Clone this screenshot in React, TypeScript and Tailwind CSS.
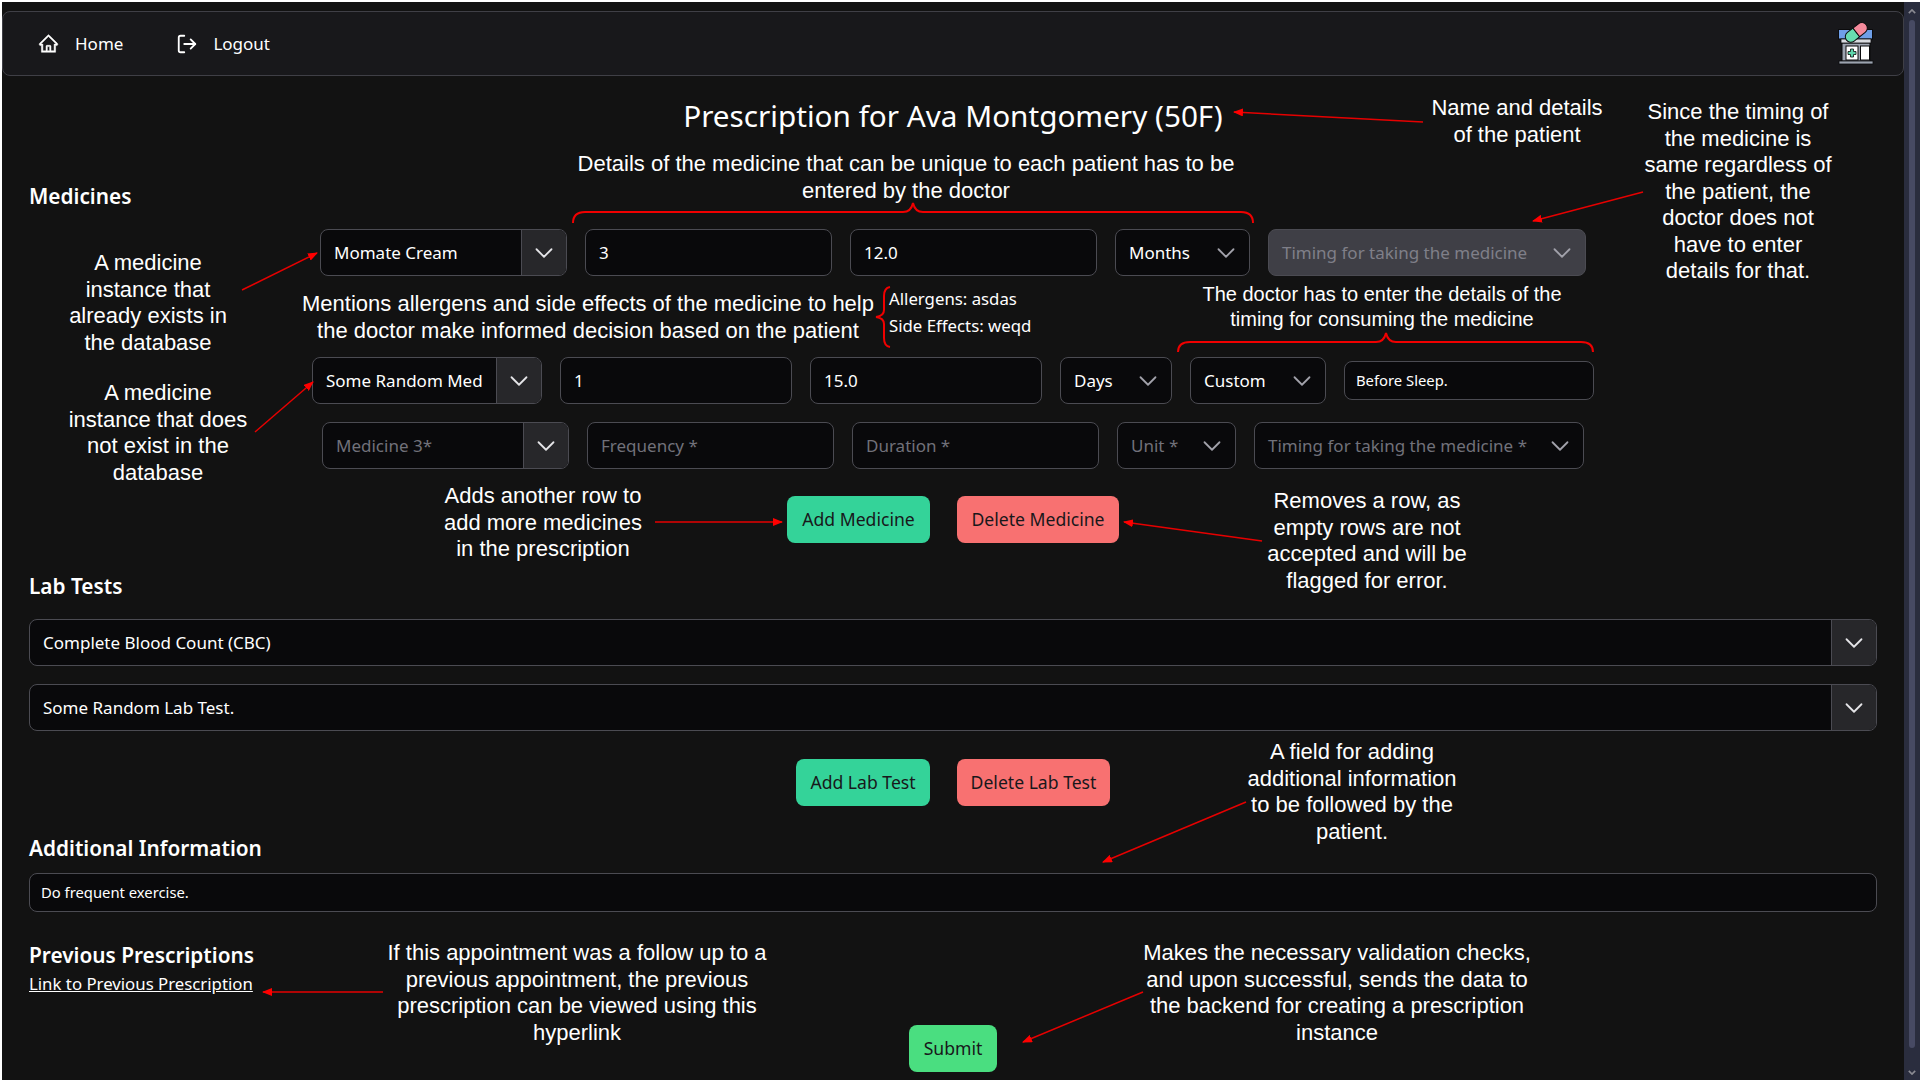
import { LogOut } from "lucide-react"
import { AiOutlineHome } from "react-icons/ai"

const uiFont = "font-['Noto_Sans',sans-serif]"
const noteFont = "font-['Liberation_Sans',Arial,sans-serif]"
const fieldBox = "flex shrink-0 items-center rounded-lg border border-[#4b4b52]"
const sectionTitle = "h-[28px] text-[20.8px] font-semibold leading-[28px]"

function Chevron({ className }: { className?: string }) {
  return (
    <svg viewBox="0 0 24 24" fill="none" stroke="currentColor" strokeWidth={1.8} className={className}>
      <path strokeLinecap="round" strokeLinejoin="round" d="m19.5 8.25-7.5 7.5-7.5-7.5" />
    </svg>
  )
}

function Combo({ text, width, muted }: { text: string; width: string; muted?: boolean }) {
  return (
    <div className={`${fieldBox} h-[47px] overflow-hidden bg-[#09090b] text-[17px] ${width}`}>
      <span className={`flex-1 truncate pl-[13px] ${muted ? "text-[#71717a]" : "text-white"}`}>{text}</span>
      <div className="flex h-full w-[45px] items-center justify-center border-l border-[#4b4b52] bg-[#27272a] text-[#e4e4e7]">
        <Chevron className="h-6 w-6" />
      </div>
    </div>
  )
}

function Field({ text, width, muted }: { text: string; width: string; muted?: boolean }) {
  return (
    <div className={`${fieldBox} h-[47px] bg-[#09090b] pl-[13px] text-[17px] ${width} ${muted ? "text-[#71717a]" : "text-white"}`}>{text}</div>
  )
}

function Dropdown({ text, width, muted, disabled }: { text: string; width: string; muted?: boolean; disabled?: boolean }) {
  return (
    <div
      className={`${fieldBox} h-[47px] justify-between pl-[13px] pr-[11px] text-[17px] ${width} ${
        disabled ? "bg-[#3f3f46] text-[#7f7f89]" : muted ? "bg-[#09090b] text-[#71717a]" : "bg-[#09090b] text-white"
      }`}
    >
      <span className="whitespace-nowrap">{text}</span>
      <Chevron className="h-6 w-6 shrink-0 text-[#a1a1aa]" />
    </div>
  )
}

function LabSelect({ text, className }: { text: string; className?: string }) {
  return (
    <div className={`${fieldBox} h-[47px] w-full overflow-hidden bg-[#09090b] text-[17px] ${className ?? ""}`}>
      <span className="flex-1 pl-[13px] text-white">{text}</span>
      <div className="flex h-full w-[45px] items-center justify-center border-l border-[#4b4b52] bg-[#27272a] text-[#e4e4e7]">
        <Chevron className="h-6 w-6" />
      </div>
    </div>
  )
}

function ActionButton({ text, className }: { text: string; className: string }) {
  return (
    <button className={`flex h-[47px] items-center justify-center rounded-lg text-[17.6px] text-[#18181b] ${className}`}>
      {text}
    </button>
  )
}

function PharmacyLogo() {
  return (
    <svg viewBox="0 0 60 55" className="h-[55px] w-[60px]">
      <rect x="16" y="27" width="28" height="18" fill="#9ca3af" stroke="#0b0b0d" strokeWidth="1" />
      <rect x="20" y="30" width="12" height="14" fill="#fff" stroke="#0b0b0d" strokeWidth="1" />
      <rect x="34.5" y="30" width="9" height="14" fill="#fff" stroke="#0b0b0d" strokeWidth="1" />
      <path d="M24.5 33h3v2.5H30v3h-2.500V41h-3v-2.500H22v-3h2.500z" fill="#5fd6ac" stroke="#0b0b0d" strokeWidth="0.8" />
      <rect x="12.500" y="13.500" width="34" height="9.500" fill="#6f9fe8" stroke="#0b0b0d" strokeWidth="1" />
      <rect x="15" y="23" width="30" height="4" fill="#d9dbe0" stroke="#0b0b0d" strokeWidth="0.8" />
      <g transform="rotate(-38 30 16)">
        <path d="M30 11h-7a5.500 5.500 0 0 0 0 11h7z" fill="#68dcb0" stroke="#0b0b0d" strokeWidth="1" />
        <path d="M30 11h7a5.500 5.500 0 0 1 0 11h-7z" fill="#f58a9b" stroke="#0b0b0d" strokeWidth="1" />
      </g>
      <rect x="13" y="45" width="34" height="3" fill="#9ca3af" stroke="#0b0b0d" strokeWidth="0.8" />
    </svg>
  )
}

function Scrollbar() {
  return (
    <aside className="flex w-[16px] shrink-0 flex-col items-center bg-[#2a2d3e] text-[#8a8a92]">
      <svg viewBox="0 0 10 6" className="mt-[7px] h-[5px] w-[8px]" fill="none" stroke="currentColor" strokeWidth="2">
        <path d="M1 5l4-4 4 4" />
      </svg>
      <div className="mt-[6px] h-[1028px] w-[6px] rounded-full bg-[#474a63]" />
      <svg viewBox="0 0 10 6" className="mt-[22px] h-[5px] w-[8px]" fill="none" stroke="currentColor" strokeWidth="2">
        <path d="M1 1l4 4 4-4" />
      </svg>
    </aside>
  )
}

function Annotations() {
  return (
    <>
      <svg className="pointer-events-none absolute inset-0 h-full w-full" viewBox="0 0 1923 1083" fill="none" stroke="#e60000" strokeWidth="1.5">
        <defs>
          <marker id="head" viewBox="0 0 10 8" refX="9" refY="4" markerWidth="10" markerHeight="8" markerUnits="userSpaceOnUse" orient="auto">
            <path d="M0 0L10 4L0 8z" fill="#ff0000" stroke="none" />
          </marker>
        </defs>
        <line x1="1423" y1="122" x2="1234" y2="112" markerEnd="url(#head)" />
        <line x1="1643" y1="192" x2="1533" y2="221" markerEnd="url(#head)" />
        <line x1="242" y1="290" x2="317" y2="253" markerEnd="url(#head)" />
        <line x1="255" y1="432" x2="313" y2="382" markerEnd="url(#head)" />
        <line x1="655" y1="522" x2="782" y2="522" markerEnd="url(#head)" />
        <line x1="1262" y1="541" x2="1124" y2="522" markerEnd="url(#head)" />
        <line x1="1246" y1="802" x2="1103" y2="862" markerEnd="url(#head)" />
        <line x1="383" y1="992" x2="263" y2="992" markerEnd="url(#head)" />
        <line x1="1143" y1="992" x2="1023" y2="1042" markerEnd="url(#head)" />
        <g stroke="#f00000" strokeWidth="2">
          <path d="M573 223Q573 212 585 212L903 212Q911 212 913 203Q915 212 923 212L1241 212Q1253 212 1253 223" />
          <path d="M1178 352Q1178 342 1190 342L1376 342Q1384 342 1386 333Q1388 342 1396 342L1581 342Q1593 342 1593 352" />
          <path d="M890 287Q884 288 884 296L884 310Q884 316 876 317Q884 318 884 324L884 338Q884 346 890 347" />
        </g>
      </svg>

      <div className={`absolute inset-0 text-center text-[22px] leading-[26.5px] whitespace-nowrap text-white ${noteFont}`}>
        <p className="absolute left-[1517px] top-[95px] -translate-x-1/2">Name and details<br />of the patient</p>
        <p className="absolute left-[1738px] top-[99px] -translate-x-1/2">
          Since the timing of<br />the medicine is<br />same regardless of<br />the patient, the<br />doctor does not<br />have to enter<br />details for that.
        </p>
        <p className="absolute left-[906px] top-[151px] -translate-x-1/2">
          Details of the medicine that can be unique to each patient has to be<br />entered by the doctor
        </p>
        <p className="absolute left-[148px] top-[250px] -translate-x-1/2">A medicine<br />instance that<br />already exists in<br />the database</p>
        <p className="absolute left-[588px] top-[291px] -translate-x-1/2">
          Mentions allergens and side effects of the medicine to help<br />the doctor make informed decision based on the patient
        </p>
        <p className="absolute left-[1382px] top-[282px] -translate-x-1/2 text-[20px] leading-[24.5px]">
          The doctor has to enter the details of the<br />timing for consuming the medicine
        </p>
        <p className="absolute left-[158px] top-[380px] -translate-x-1/2">A medicine<br />instance that does<br />not exist in the<br />database</p>
        <p className="absolute left-[543px] top-[483px] -translate-x-1/2">Adds another row to<br />add more medicines<br />in the prescription</p>
        <p className="absolute left-[1367px] top-[488px] -translate-x-1/2">Removes a row, as<br />empty rows are not<br />accepted and will be<br />flagged for error.</p>
        <p className="absolute left-[1352px] top-[739px] -translate-x-1/2">A field for adding<br />additional information<br />to be followed by the<br />patient.</p>
        <p className="absolute left-[577px] top-[940px] -translate-x-1/2">If this appointment was a follow up to a<br />previous appointment, the previous<br />prescription can be viewed using this<br />hyperlink</p>
        <p className="absolute left-[1337px] top-[940px] -translate-x-1/2">Makes the necessary validation checks,<br />and upon successful, sends the data to<br />the backend for creating a prescription<br />instance</p>
      </div>
    </>
  )
}

export default function App() {
  return (
    <div className={`relative flex h-[1083px] w-full overflow-hidden bg-white pb-[3px] pl-[2px] pr-[3px] pt-[2px] ${uiFont}`}>
      <main className="flex min-w-0 flex-1 flex-col bg-[#121212] pt-[9px] text-white">
        <nav className="flex h-[65px] shrink-0 items-center justify-between rounded-lg border border-[#3f3f46] bg-[#18181b] pl-[35px] pr-[17px]">
          <div className="flex items-center text-[17px]">
            <AiOutlineHome size={21} className="stroke-[24px]" />
            <span className="ml-[16px]">Home</span>
            <LogOut size={22} strokeWidth={2} className="ml-[53px]" />
            <span className="ml-[15px]">Logout</span>
          </div>
          <PharmacyLogo />
        </nav>

        <div className="flex flex-col px-[27px]">
          <h1 className="mt-[20px] h-[40px] text-center text-[29.7px] leading-[40px]">Prescription for Ava Montgomery (50F)</h1>

          <h2 className={`mt-[46px] ${sectionTitle}`}>Medicines</h2>

          <div className="mt-[19px] flex justify-center gap-[18px]">
            <Combo text="Momate Cream" width="w-[247px]" />
            <Field text="3" width="w-[247px]" />
            <Field text="12.0" width="w-[247px]" />
            <Dropdown text="Months" width="w-[135px]" />
            <Dropdown text="Timing for taking the medicine" width="w-[318px]" disabled />
          </div>

          <div className="mt-[9px] h-[72px] pl-[860px] text-[16.8px] leading-[27px]">
            <p>Allergens: asdas</p>
            <p>Side Effects: weqd</p>
          </div>

          <div className="flex items-center justify-center gap-[18px]">
            <Combo text="Some Random Med" width="w-[230px]" />
            <Field text="1" width="w-[232px]" />
            <Field text="15.0" width="w-[232px]" />
            <Dropdown text="Days" width="w-[112px]" />
            <Dropdown text="Custom" width="w-[136px]" />
            <div className={`${fieldBox} h-[39px] w-[250px] bg-[#09090b] pl-[11px] text-[14.8px] text-white`}>Before Sleep.</div>
          </div>

          <div className="mt-[18px] flex justify-center gap-[18px]">
            <Combo text="Medicine 3*" width="w-[247px]" muted />
            <Field text="Frequency *" width="w-[247px]" muted />
            <Field text="Duration *" width="w-[247px]" muted />
            <Dropdown text="Unit *" width="w-[119px]" muted />
            <Dropdown text="Timing for taking the medicine *" width="w-[330px]" muted />
          </div>

          <div className="mt-[27px] flex justify-center gap-[27px]">
            <ActionButton text="Add Medicine" className="w-[143px] bg-[#34d399]" />
            <ActionButton text="Delete Medicine" className="w-[162px] bg-[#f87171]" />
          </div>

          <h2 className={`mt-[29px] ${sectionTitle}`}>Lab Tests</h2>

          <LabSelect text="Complete Blood Count (CBC)" className="mt-[19px]" />
          <LabSelect text="Some Random Lab Test." className="mt-[18px]" />

          <div className="mt-[28px] flex justify-center gap-[27px]">
            <ActionButton text="Add Lab Test" className="w-[134px] bg-[#34d399]" />
            <ActionButton text="Delete Lab Test" className="w-[153px] bg-[#f87171]" />
          </div>

          <h2 className={`mt-[28px] ${sectionTitle}`}>Additional Information</h2>

          <div className={`${fieldBox} mt-[11px] h-[39px] w-full bg-[#09090b] pl-[11px] text-[14.8px] text-white`}>Do frequent exercise.</div>

          <h2 className={`mt-[29px] ${sectionTitle}`}>Previous Prescriptions</h2>
          <a href="#" className="mt-[3px] w-fit text-[16.8px] leading-[24px] underline">Link to Previous Prescription</a>

          <button className="mx-auto mt-[29px] flex h-[47px] w-[88px] items-center justify-center rounded-lg bg-[#4ade80] text-[17.6px] text-[#18181b]">
            Submit
          </button>
        </div>
      </main>
      <Scrollbar />
      <Annotations />
    </div>
  )
}
